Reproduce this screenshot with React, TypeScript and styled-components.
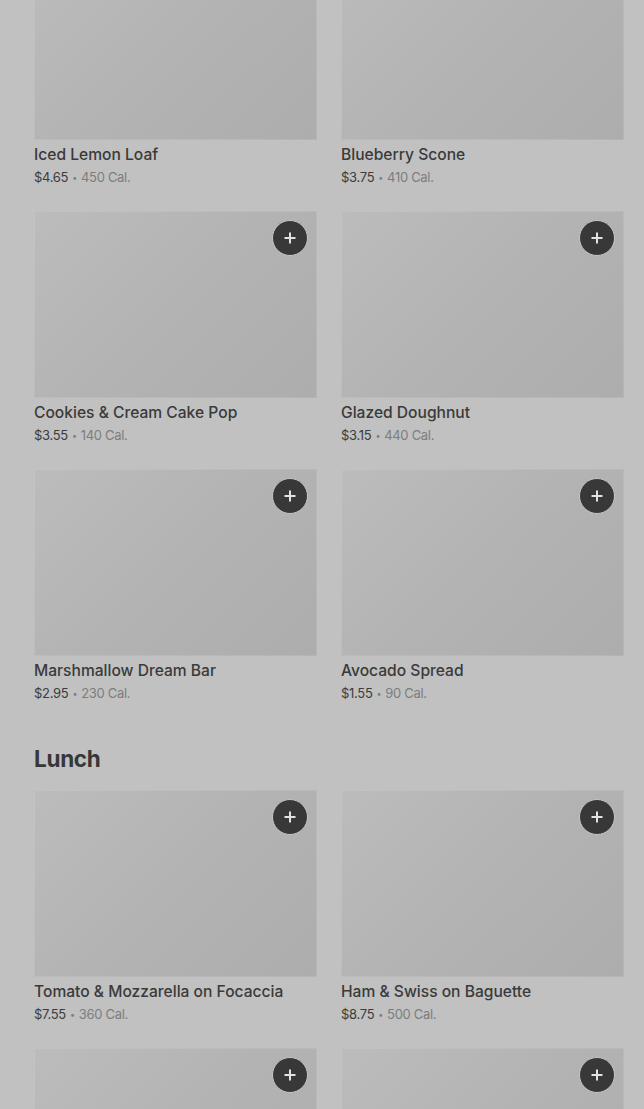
import React from "react";
import styled, { createGlobalStyle } from "styled-components";

const Global = createGlobalStyle`
  html, body { margin: 0; padding: 0; background: #c1c1c1; }
  body { font-family: Inter, "Noto Sans", "Liberation Sans", sans-serif; overflow: hidden; }
  * { box-sizing: border-box; }
`;

const Page = styled.main`
  margin-top: -47px;
  padding: 0 20px 0 34px;
`;

const Section = styled.section`
  & + & { margin-top: 39px; }
`;

const SectionTitle = styled.h2`
  margin: 0 0 15px;
  font-size: 22.5px;
  line-height: 32px;
  font-weight: 700;
  color: #373737;
  letter-spacing: -0.3px;
`;

const Grid = styled.div`
  display: grid;
  grid-template-columns: 283px 283px;
  column-gap: 24px;
  row-gap: 23px;
`;

const Card = styled.article`
  display: flex;
  flex-direction: column;
`;

const Thumb = styled.div`
  position: relative;
  height: 187px;
  background: linear-gradient(135deg, #bcbcbc 0%, #b3b3b3 50%, #adadad 100%);
  box-shadow: inset 0 0 0 1px rgba(255, 255, 255, 0.1);
`;

const AddButton = styled.button`
  position: absolute;
  top: 9px;
  right: 9px;
  width: 36px;
  height: 36px;
  border-radius: 50%;
  border: 1px solid #c6c6c6;
  background: #383838;
  display: flex;
  align-items: center;
  justify-content: center;
  padding: 0;
  cursor: pointer;
`;

const Name = styled.div`
  margin-top: 3px;
  height: 24px;
  font-size: 15.6px;
  line-height: 24px;
  font-weight: 500;
  color: #3a3a3a;
`;

const Meta = styled.div`
  height: 21px;
  font-size: 13px;
  line-height: 21px;
  letter-spacing: -0.3px;
  color: #3c3c3c;
`;

const Dot = styled.span`
  margin: 0 4px;
  font-size: 9px;
  line-height: 1;
  vertical-align: 1px;
  color: #7d7d7d;
`;

const Cal = styled.span`
  color: #7d7d7d;
`;

type Item = { name: string; price: string; cal: number };

const breakfast: Item[] = [
  { name: "Iced Lemon Loaf", price: "$4.65", cal: 450 },
  { name: "Blueberry Scone", price: "$3.75", cal: 410 },
  { name: "Cookies & Cream Cake Pop", price: "$3.55", cal: 140 },
  { name: "Glazed Doughnut", price: "$3.15", cal: 440 },
  { name: "Marshmallow Dream Bar", price: "$2.95", cal: 230 },
  { name: "Avocado Spread", price: "$1.55", cal: 90 },
];

const lunch: Item[] = [
  { name: "Tomato & Mozzarella on Focaccia", price: "$7.55", cal: 360 },
  { name: "Ham & Swiss on Baguette", price: "$8.75", cal: 500 },
  { name: "Turkey & Havarti Sandwich", price: "$7.95", cal: 520 },
  { name: "Chicken & Bacon Panini", price: "$8.45", cal: 600 },
];

const Plus = () => (
  <svg width="14" height="14" viewBox="0 0 14 14" aria-hidden="true">
    <path d="M7 1.5v11M1.5 7h11" stroke="#e2e2e2" strokeWidth="2" strokeLinecap="butt" />
  </svg>
);

const ItemCard = ({ item }: { item: Item }) => (
  <Card>
    <Thumb>
      <AddButton aria-label={`Add ${item.name}`}>
        <Plus />
      </AddButton>
    </Thumb>
    <Name>{item.name}</Name>
    <Meta>
      {item.price}
      <Dot>•</Dot>
      <Cal>{item.cal} Cal.</Cal>
    </Meta>
  </Card>
);

export default function App() {
  return (
    <>
      <Global />
      <Page>
        <Section>
          <Grid>
            {breakfast.map((it) => (
              <ItemCard key={it.name} item={it} />
            ))}
          </Grid>
        </Section>
        <Section>
          <SectionTitle>Lunch</SectionTitle>
          <Grid>
            {lunch.map((it) => (
              <ItemCard key={it.name} item={it} />
            ))}
          </Grid>
        </Section>
      </Page>
    </>
  );
}
